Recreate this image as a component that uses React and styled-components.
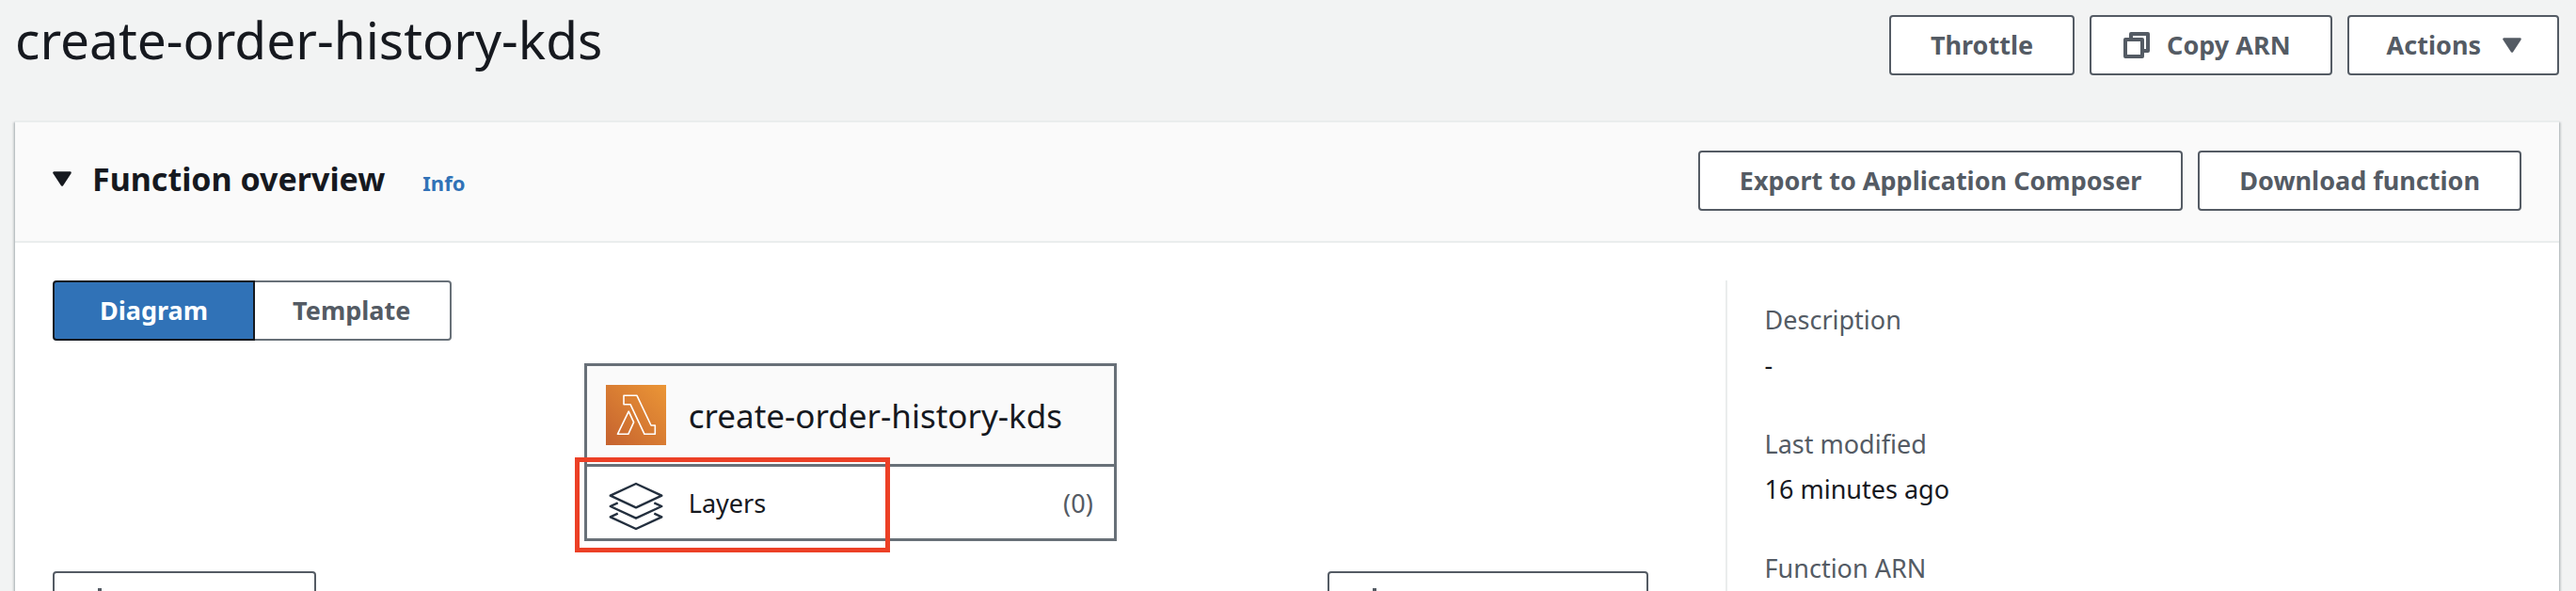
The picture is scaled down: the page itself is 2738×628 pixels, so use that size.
import React from 'react';
import styled, { createGlobalStyle, css } from 'styled-components';

const GlobalStyle = createGlobalStyle`
  *, *::before, *::after { box-sizing: border-box; }
  body {
    margin: 0;
    background: #f2f3f3;
    color: #16191f;
    font-family: "Noto Sans", "Open Sans", sans-serif;
    font-size: 27px;
  }
  h1, h2, dl, dd { margin: 0; }
`;

const Page = styled.main`
  display: flex;
  flex-direction: column;
  height: 100vh;
  padding: 16px 18px 0 16px;
  overflow: hidden;
`;

const PageHeader = styled.header`
  display: flex;
  justify-content: space-between;
  align-items: flex-start;
  padding-bottom: 48px;
`;

const PageTitle = styled.h1`
  font-size: 55px;
  font-weight: 400;
  line-height: 52px;
`;

const ButtonGroup = styled.div`
  display: flex;
  gap: 16px;
`;

const Button = styled.button`
  display: inline-flex;
  align-items: center;
  height: 64px;
  padding: 0 42px;
  border: 2px solid #545b64;
  border-radius: 4px;
  background: #fff;
  color: #545b64;
  font: inherit;
  font-weight: 700;
  line-height: 36px;
  white-space: nowrap;
  cursor: pointer;
  ${({ $icon }) => $icon === 'start' && css`
    gap: 18px;
    padding-left: 34px;
  `}
  ${({ $icon }) => $icon === 'end' && css`
    gap: 23px;
    padding: 0 38px 0 40px;
  `}
`;

const Panel = styled.section`
  flex: 1 0 auto;
  border-top: 2px solid #eaeded;
  background: #fff;
  box-shadow: 0 2px 2px 0 rgba(0, 28, 36, 0.3), 2px 2px 2px 0 rgba(0, 28, 36, 0.15),
    -2px 2px 2px 0 rgba(0, 28, 36, 0.15);
`;

const PanelHeader = styled.header`
  display: flex;
  justify-content: space-between;
  align-items: flex-start;
  padding: 30px 40px 32px;
  border-bottom: 2px solid #eaeded;
  background: #fafafa;
`;

const PanelHeading = styled.div`
  display: flex;
  align-items: last baseline;
  gap: 40px;
  line-height: 60px;
`;

const PanelTitle = styled.h2`
  display: flex;
  align-items: last baseline;
  font-size: 34px;
  font-weight: 700;
`;

const Expander = styled.button`
  display: flex;
  align-items: center;
  gap: 22px;
  padding: 0;
  border: 0;
  background: none;
  color: inherit;
  font: inherit;
  line-height: 60px;
  cursor: pointer;
`;

const InfoLink = styled.a`
  color: #3072b7;
  font-size: 22px;
  font-weight: 700;
  line-height: 32px;
  text-decoration: none;
`;

const PanelBody = styled.div`
  display: grid;
  grid-template-columns: 21fr 10fr;
  padding: 40px 40px 0;
`;

const Designer = styled.div`
  display: flex;
  flex-direction: column;
  padding-right: 82px;
`;

const Segments = styled.div`
  display: flex;
`;

const Segment = styled.button`
  height: 64px;
  padding: 0 42px 0 40px;
  border: 2px solid #687078;
  border-left-width: 0;
  border-radius: 0 4px 4px 0;
  background: #fff;
  color: #545b64;
  font: inherit;
  font-weight: 700;
  line-height: 36px;
  cursor: pointer;
  ${({ $selected }) => $selected && css`
    padding: 0 48px;
    border: 2px solid #16191f;
    border-radius: 4px 0 0 4px;
    background: #3072b7;
    color: #fff;
  `}
`;

const FunctionNode = styled.div`
  align-self: center;
  width: 566px;
  margin: 24px 0 32px;
  border: 3px solid #687078;
`;

const NodeRow = styled.div`
  position: relative;
  display: flex;
  align-items: center;
  gap: 24px;
  height: 76px;
  padding: 0 22px 0 20px;
`;

const NodeTitle = styled(NodeRow)`
  height: 107px;
  border-bottom: 3px solid #687078;
  background: #fafafa;
  font-size: 35px;
`;

const LayerCount = styled.span`
  margin-left: auto;
  color: #545b64;
`;

const Highlight = styled.div`
  position: absolute;
  top: -10px;
  left: -13px;
  width: 335px;
  height: 101px;
  border: 5px solid #ec4026;
  pointer-events: none;
`;

const DesignerActions = styled.div`
  display: flex;
  justify-content: space-between;
`;

const Details = styled.dl`
  display: flex;
  flex-direction: column;
  gap: 36px;
  padding: 18px 0 0 40px;
  border-left: 2px solid #eaeded;
  line-height: 48px;
`;

const Term = styled.dt`
  color: #545b64;
`;

const Caret = () => (
  <svg width="20" height="16" viewBox="0 0 20 16" aria-hidden="true">
    <path d="M1.5 1.5H18.500L10 14.500Z" fill="currentColor" stroke="currentColor" strokeWidth="2.600" strokeLinejoin="round" />
  </svg>
);

const CopyIcon = () => (
  <svg width="28" height="28" viewBox="0 0 28 28" fill="none" stroke="currentColor" strokeWidth="4" strokeLinejoin="round" aria-hidden="true">
    <path d="M8 8V2H26V20H20" />
    <rect x="2" y="8" width="18" height="18" />
  </svg>
);

const PlusIcon = () => (
  <svg width="28" height="28" viewBox="0 0 28 28" stroke="currentColor" strokeWidth="4" aria-hidden="true">
    <path d="M14 0V28M0 14H28" />
  </svg>
);

const LambdaIcon = () => (
  <svg width="64" height="64" viewBox="0 0 64 64" aria-hidden="true">
    <defs>
      <linearGradient id="lambda-fill" x1="0" y1="1" x2="1" y2="0">
        <stop offset="0" stopColor="#c5622f" />
        <stop offset="1" stopColor="#eb9636" />
      </linearGradient>
    </defs>
    <rect width="64" height="64" fill="url(#lambda-fill)" />
    <g fill="none" stroke="#fff" strokeWidth="1.600" strokeLinejoin="round">
      <path d="M19 11.300H33L48 43H52.300V52.300H41L26 20.700H19Z" />
      <path d="M24.200 28.200L29.600 39.700L23.800 52.300H12.400Z" />
    </g>
  </svg>
);

const LayersIcon = () => (
  <svg width="64" height="64" viewBox="0 0 64 64" fill="none" stroke="#232f3e" strokeWidth="2.400" strokeLinejoin="round" aria-hidden="true">
    <path d="M32 12L59.300 24.700L32 37.300L4.700 24.700Z" />
    <path d="M12.700 32.300L4.700 36L32 48.700L59.300 36L51.300 32.300" />
    <path d="M12.700 43.700L4.700 47.300L32 60L59.300 47.300L51.300 43.700" />
  </svg>
);

export default function App() {
  return (
    <>
      <GlobalStyle />
      <Page>
        <PageHeader>
          <PageTitle>create-order-history-kds</PageTitle>
          <ButtonGroup>
            <Button type="button">Throttle</Button>
            <Button type="button" $icon="start"><CopyIcon />Copy ARN</Button>
            <Button type="button" $icon="end">Actions<Caret /></Button>
          </ButtonGroup>
        </PageHeader>

        <Panel>
          <PanelHeader>
            <PanelHeading>
              <PanelTitle>
                <Expander type="button" aria-expanded="true"><Caret />Function overview</Expander>
              </PanelTitle>
              <InfoLink href="#info">Info</InfoLink>
            </PanelHeading>
            <ButtonGroup>
              <Button type="button">Export to Application Composer</Button>
              <Button type="button">Download function</Button>
            </ButtonGroup>
          </PanelHeader>

          <PanelBody>
            <Designer>
              <Segments>
                <Segment type="button" $selected aria-pressed="true">Diagram</Segment>
                <Segment type="button" aria-pressed="false">Template</Segment>
              </Segments>
              <FunctionNode>
                <NodeTitle><LambdaIcon />create-order-history-kds</NodeTitle>
                <NodeRow>
                  <LayersIcon />
                  <span>Layers</span>
                  <LayerCount>(0)</LayerCount>
                  <Highlight />
                </NodeRow>
              </FunctionNode>
              <DesignerActions>
                <Button type="button" $icon="start"><PlusIcon />Add trigger</Button>
                <Button type="button" $icon="start"><PlusIcon />Add destination</Button>
              </DesignerActions>
            </Designer>

            <Details>
              <div>
                <Term>Description</Term>
                <dd>-</dd>
              </div>
              <div>
                <Term>Last modified</Term>
                <dd>16 minutes ago</dd>
              </div>
              <div>
                <Term>Function ARN</Term>
              </div>
            </Details>
          </PanelBody>
        </Panel>
      </Page>
    </>
  );
}
